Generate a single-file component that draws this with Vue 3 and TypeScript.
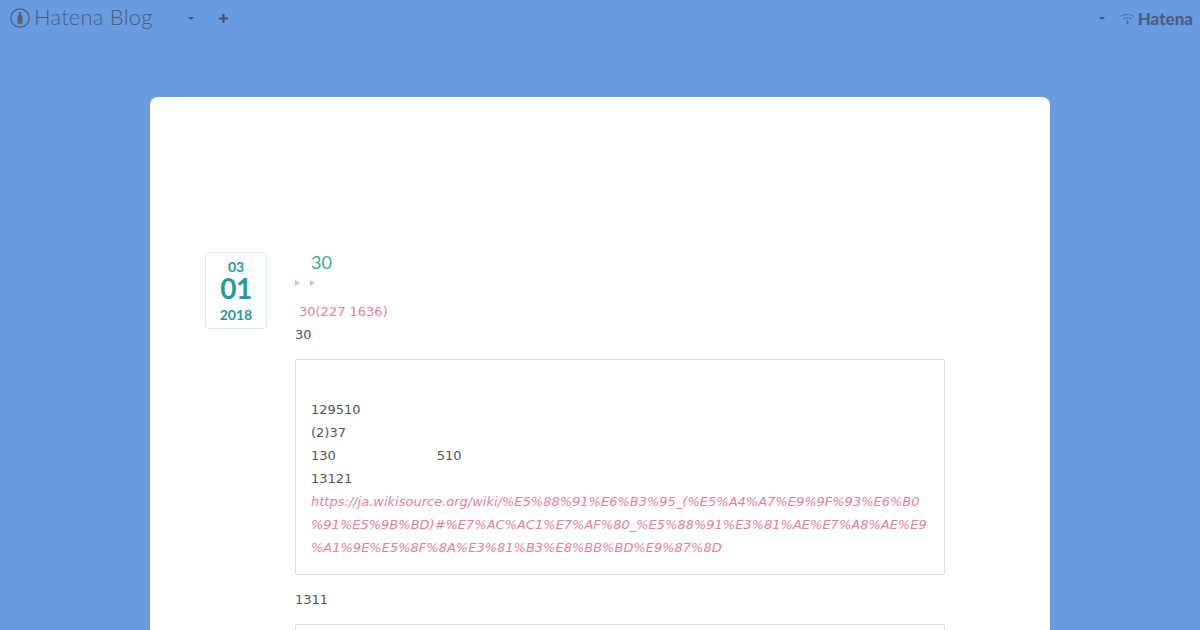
<script setup lang="ts">
const lines: string[] = ['129510', '(2)37']
const url = 'https://ja.wikisource.org/wiki/%E5%88%91%E6%B3%95_(%E5%A4%A7%E9%9F%93%E6%B0%91%E5%9B%BD)#%E7%AC%AC1%E7%AF%80_%E5%88%91%E3%81%AE%E7%A8%AE%E9%A1%9E%E5%8F%8A%E3%81%B3%E8%BB%BD%E9%87%8D'
</script>

<template>
  <div class="page">
    <header class="bar">
      <div class="left">
        <svg class="mark" width="20" height="20" viewBox="0 0 20 20">
          <circle cx="10" cy="10" r="9.200" fill="none" stroke="#4f5f7c" stroke-width="1.300" />
          <path d="M7.600 15.800V8.800c0-1.200 1.300-1.500 1.300-2.600V4h2.200v2.200c0 1.100 1.300 1.400 1.300 2.600v7z" fill="#5f5f66" />
        </svg>
        <span class="brand">Hatena Blog</span>
        <span class="caret caret-a"></span>
        <svg class="plus" width="11" height="11" viewBox="0 0 11 11">
          <path d="M5.500 1v9M1 5.500h9" stroke="#4c5566" stroke-width="2.200" fill="none" />
        </svg>
      </div>
      <div class="right">
        <span class="caret"></span>
        <svg class="wifi" width="15" height="11" viewBox="0 0 15 11">
          <path d="M1 3.500C4.500 .8 10.500 .8 14 3.500M3.500 6c2.500-1.700 5.500-1.700 8 0M6 8.400c1-.6 2-.6 3 0" fill="none" stroke="#4f5f7c" stroke-width="1" stroke-dasharray="2 1" />
          <circle cx="7.500" cy="10" r=".9" fill="#4f5f7c" />
        </svg>
        <span class="hatena">Hatena</span>
      </div>
    </header>

    <main class="card">
      <article class="entry">
        <div class="date">
          <span class="month">03</span>
          <span class="day">01</span>
          <span class="year">2018</span>
        </div>
        <div class="body">
          <h1 class="title">30</h1>
          <div class="crumbs"><span class="tri"></span><span class="tri"></span></div>
          <p class="lead">30(227 1636)</p>
          <p class="text">30</p>
          <blockquote class="quote">
            <p v-for="line in lines" :key="line">{{ line }}</p>
            <p class="split"><span>130</span><span>510</span></p>
            <p>13121</p>
            <p class="cite">{{ url }}</p>
          </blockquote>
          <p class="text after">1311</p>
          <blockquote class="quote"></blockquote>
        </div>
      </article>
    </main>
  </div>
</template>

<style>
html, body { margin: 0; height: 630px; overflow: hidden; background: #689be0; }
</style>

<style scoped>
.page {
  height: 630px;
  overflow: hidden;
  background: #689be0;
  font-family: "DejaVu Sans", sans-serif;
  font-size: 13px;
  color: #555;
}
.bar {
  height: 36px;
  display: flex;
  justify-content: space-between;
  align-items: flex-start;
  padding: 0 7px 0 10px;
}
.left, .right { display: flex; align-items: center; height: 36px; }
.mark { flex: none; }
.brand {
  margin-left: 4px;
  margin-top: -3px;
  font-family: Lato, sans-serif;
  font-weight: 300;
  font-size: 22px;
  letter-spacing: .2px;
  color: #4f5f7c;
}
.caret {
  width: 0;
  height: 0;
  border-left: 3px solid transparent;
  border-right: 3px solid transparent;
  border-top: 3px solid #4f5566;
}
.caret-a { margin-left: 35px; }
.plus { margin-left: 24px; }
.wifi { margin-left: 15px; }
.hatena {
  margin-left: 3px;
  font-family: Lato, sans-serif;
  font-weight: 900;
  font-size: 17px;
  color: #4f5f7c;
}
.card {
  margin: 61px auto 0;
  width: 900px;
  height: 700px;
  box-sizing: border-box;
  padding: 155px 55px 0;
  background: #fff;
  border-radius: 8px;
}
.entry { display: flex; align-items: flex-start; gap: 28px; }
.date {
  flex: none;
  width: 62px;
  height: 77px;
  box-sizing: border-box;
  border: 1px solid #d8eeee;
  border-radius: 4px;
  display: flex;
  flex-direction: column;
  align-items: center;
  padding-top: 7px;
  color: #26999b;
  font-family: Lato, sans-serif;
  line-height: 1;
}
.month { font-size: 14px; height: 14px; font-weight: 700; }
.day { font-size: 28px; height: 28px; font-weight: 700; letter-spacing: -.5px; }
.year { margin-top: 6px; font-size: 14px; font-weight: 700; }
.body { width: 650px; }
.title {
  margin: 0;
  padding-left: 16px;
  font-family: Lato, sans-serif;
  font-size: 18px;
  font-weight: 400;
  line-height: 20px;
  color: #3aa5a5;
}
.crumbs {
  height: 22px;
  display: flex;
  gap: 10px;
  align-items: center;
}
.tri {
  width: 0;
  height: 0;
  border-top: 3px solid transparent;
  border-bottom: 3px solid transparent;
  border-left: 5px solid #a9cfe0;
}
.lead { margin: 6px 0 0 4px; line-height: 23px; color: #e37f9f; }
.text { margin: 0; line-height: 23px; }
.quote {
  margin: 13px 0 0;
  min-height: 216px;
  box-sizing: border-box;
  padding: 38px 15px 15px;
  border: 1px solid #dcdcdc;
  border-radius: 2px;
}
.quote p { margin: 0; line-height: 23px; }
.split { display: flex; gap: 101px; }
.quote .cite {
  color: #e37f9f;
  font-style: italic;
  overflow-wrap: anywhere;
}
.after { margin-top: 13px; }
</style>
